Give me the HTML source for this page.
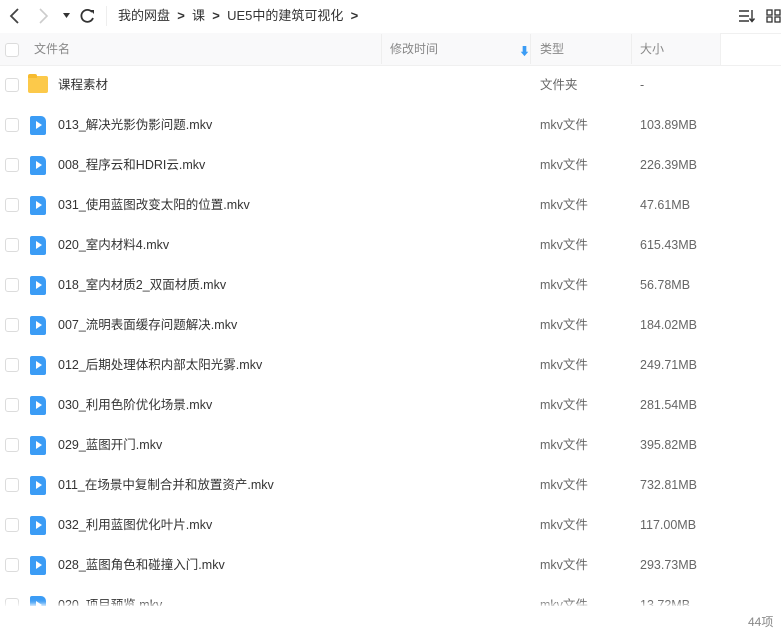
<!DOCTYPE html>
<html><head><meta charset="utf-8"><style>
body{margin:0;width:781px;height:631px;overflow:hidden;background:#fff;font-family:"Liberation Sans","Noto Sans CJK SC",sans-serif;font-size:12.5px;color:#333;position:relative}
.a{position:absolute;white-space:nowrap}
.cb{position:absolute;left:5px;width:12px;height:12px;border:1px solid #dcdcdc;border-radius:3px;background:#fff}
.row{position:absolute;left:0;width:781px;height:40px;line-height:40px}
.nm{position:absolute;left:58px;top:0;color:#333}
.tp{position:absolute;left:540px;top:0;color:#666}
.sz{position:absolute;left:640px;top:0;color:#666}
.ic{position:absolute;left:30px;top:11px;width:16px;height:19px;background:#3b9cf5;border-radius:2px 5px 2px 2px}
.ic:after{content:"";position:absolute;left:6px;top:5px;border-left:6px solid #fff;border-top:4.5px solid transparent;border-bottom:4.5px solid transparent}
.hd{position:absolute;top:34px;height:30px;color:#888;font-size:12px;line-height:30px}
</style></head><body>
<svg class="a" style="left:8px;top:7px" width="14" height="18"><path d="M10 2 L3 9 L10 16" stroke="#444" stroke-width="1.8" fill="none"/></svg>
<svg class="a" style="left:36px;top:7px" width="14" height="18"><path d="M4 2 L11 9 L4 16" stroke="#ccc" stroke-width="1.6" fill="none"/></svg>
<svg class="a" style="left:63px;top:12px" width="8" height="8"><path d="M0 1 L7 1 L3.5 6Z" fill="#333"/></svg>
<svg class="a" style="left:80px;top:8px" width="16" height="16"><path d="M12 4 A6 6 0 1 0 13 10" stroke="#333" stroke-width="1.8" fill="none"/><path d="M10 2 L14 2 L14 6Z" fill="#333"/></svg>
<div class="a" style="left:106px;top:6px;width:1px;height:20px;background:#eee"></div>
<div class="a" style="left:118px;top:0;line-height:32px;font-size:13px;color:#333">我的网盘 &nbsp;<b style="font-weight:bold">&gt;</b>&nbsp; 课 &nbsp;<b>&gt;</b>&nbsp; UE5中的建筑可视化 &nbsp;<b>&gt;</b></div>
<svg class="a" style="left:738px;top:9px" width="18" height="14"><path d="M1 2H11M1 7H11M1 12H11" stroke="#333" stroke-width="1.5"/><path d="M14 1V12M11.5 9.5L14 12.5L16.5 9.5" stroke="#333" stroke-width="1.4" fill="none"/></svg>
<svg class="a" style="left:766px;top:9px" width="15" height="14"><rect x="1" y="1" width="5" height="5" stroke="#333" fill="none" stroke-width="1.3"/><rect x="9" y="1" width="5" height="5" stroke="#333" fill="none" stroke-width="1.3"/><rect x="1" y="8" width="5" height="5" stroke="#333" fill="none" stroke-width="1.3"/><rect x="9" y="8" width="5" height="5" stroke="#333" fill="none" stroke-width="1.3"/></svg>
<div class="a" style="left:0;top:33px;width:721px;height:32px;background:#f9f9fa;border-bottom:1px solid #f0f0f0"></div>
<div class="a" style="left:720px;top:33px;width:61px;height:31px;border:1px solid #f0f0f0;border-right:none"></div>
<div class="cb" style="top:43px"></div>
<div class="hd" style="left:34px">文件名</div>
<div class="a" style="left:381px;top:34px;width:1px;height:30px;background:#eee"></div>
<div class="hd" style="left:390px">修改时间</div>
<div class="a" style="left:519px;top:43px;color:#3b9cf5;font-size:11px">⬇</div>
<div class="a" style="left:530px;top:34px;width:1px;height:30px;background:#eee"></div>
<div class="hd" style="left:540px">类型</div>
<div class="a" style="left:631px;top:34px;width:1px;height:30px;background:#eee"></div>
<div class="hd" style="left:640px">大小</div>

<div class="row" style="top:65px"><div class="cb" style="top:13px"></div><div class="a" style="left:28px;top:11px;width:20px;height:17px;background:#fcc94a;border-radius:2px"></div><div class="a" style="left:28px;top:9px;width:9px;height:4px;background:#f7bb2f;border-radius:2px 2px 0 0"></div><div class="nm">课程素材</div><div class="tp">文件夹</div><div class="sz">-</div></div>

<div class="row" style="top:105px"><div class="cb" style="top:13px"></div><div class="ic"></div><div class="nm">013_解决光影伪影问题.mkv</div><div class="tp">mkv文件</div><div class="sz">103.89MB</div></div>
<div class="row" style="top:145px"><div class="cb" style="top:13px"></div><div class="ic"></div><div class="nm">008_程序云和HDRI云.mkv</div><div class="tp">mkv文件</div><div class="sz">226.39MB</div></div>
<div class="row" style="top:185px"><div class="cb" style="top:13px"></div><div class="ic"></div><div class="nm">031_使用蓝图改变太阳的位置.mkv</div><div class="tp">mkv文件</div><div class="sz">47.61MB</div></div>
<div class="row" style="top:225px"><div class="cb" style="top:13px"></div><div class="ic"></div><div class="nm">020_室内材料4.mkv</div><div class="tp">mkv文件</div><div class="sz">615.43MB</div></div>
<div class="row" style="top:265px"><div class="cb" style="top:13px"></div><div class="ic"></div><div class="nm">018_室内材质2_双面材质.mkv</div><div class="tp">mkv文件</div><div class="sz">56.78MB</div></div>
<div class="row" style="top:305px"><div class="cb" style="top:13px"></div><div class="ic"></div><div class="nm">007_流明表面缓存问题解决.mkv</div><div class="tp">mkv文件</div><div class="sz">184.02MB</div></div>
<div class="row" style="top:345px"><div class="cb" style="top:13px"></div><div class="ic"></div><div class="nm">012_后期处理体积内部太阳光雾.mkv</div><div class="tp">mkv文件</div><div class="sz">249.71MB</div></div>
<div class="row" style="top:385px"><div class="cb" style="top:13px"></div><div class="ic"></div><div class="nm">030_利用色阶优化场景.mkv</div><div class="tp">mkv文件</div><div class="sz">281.54MB</div></div>
<div class="row" style="top:425px"><div class="cb" style="top:13px"></div><div class="ic"></div><div class="nm">029_蓝图开门.mkv</div><div class="tp">mkv文件</div><div class="sz">395.82MB</div></div>
<div class="row" style="top:465px"><div class="cb" style="top:13px"></div><div class="ic"></div><div class="nm">011_在场景中复制合并和放置资产.mkv</div><div class="tp">mkv文件</div><div class="sz">732.81MB</div></div>
<div class="row" style="top:505px"><div class="cb" style="top:13px"></div><div class="ic"></div><div class="nm">032_利用蓝图优化叶片.mkv</div><div class="tp">mkv文件</div><div class="sz">117.00MB</div></div>
<div class="row" style="top:545px"><div class="cb" style="top:13px"></div><div class="ic"></div><div class="nm">028_蓝图角色和碰撞入门.mkv</div><div class="tp">mkv文件</div><div class="sz">293.73MB</div></div>
<div class="row" style="top:585px"><div class="cb" style="top:13px"></div><div class="ic"></div><div class="nm">020_项目预览.mkv</div><div class="tp">mkv文件</div><div class="sz">13.72MB</div></div>
<div class="a" style="left:0;top:606px;width:781px;height:25px;background:#fff;box-shadow:0 -2px 4px rgba(255,255,255,0.9)"></div>
<div class="a" style="left:748px;top:613px;color:#888;font-size:12px">44项</div>
</body></html>
